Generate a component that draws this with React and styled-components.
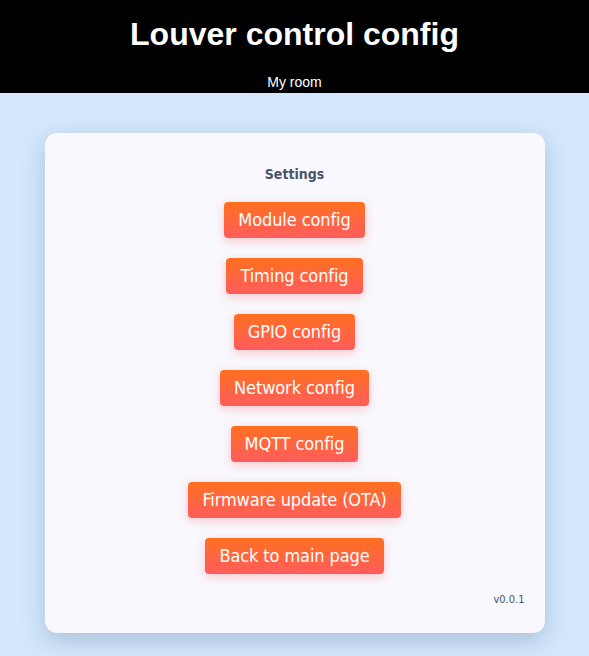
import React from "react";
import styled, { createGlobalStyle } from "styled-components";

const GlobalStyle = createGlobalStyle`
  html, body {
    margin: 0;
    padding: 0;
    background: #d4e8fc;
    font-family: "DejaVu Sans Condensed", "DejaVu Sans", sans-serif;
  }
`;

const Page = styled.div`
  min-height: 656px;
  background: #d4e8fc;
`;

const Header = styled.header`
  background: #000;
  color: #fff;
  text-align: center;
  padding: 16px 0 3px;
  font-family: "Liberation Sans", Arial, sans-serif;
`;

const Title = styled.h1`
  margin: 0 0 21px;
  font-size: 32px;
  font-weight: 700;
  line-height: 37px;
`;

const Subtitle = styled.p`
  margin: 0;
  font-size: 14px;
  line-height: 16px;
`;

const Main = styled.main`
  display: flex;
  justify-content: center;
  padding-top: 40px;
`;

const Card = styled.section`
  width: 500px;
  height: 500px;
  box-sizing: border-box;
  background: #f8f8fe;
  border-radius: 12px;
  box-shadow: 0 8px 24px rgba(60, 90, 130, 0.28);
  padding: 33px 20px 27px;
  display: flex;
  flex-direction: column;
  align-items: center;
`;

const Heading = styled.h2`
  margin: 0 0 20px;
  font-size: 14px;
  line-height: 16px;
  font-weight: 700;
  color: #4a5568;
`;

const ButtonList = styled.nav`
  display: flex;
  flex-direction: column;
  align-items: center;
  gap: 20px;
`;

const Button = styled.button`
  height: 36px;
  padding: 0 14px;
  border: none;
  border-radius: 4px;
  background: linear-gradient(180deg, #ff7020 0%, #ff5c5c 100%);
  color: #fff;
  font-family: "DejaVu Sans Condensed", "DejaVu Sans", sans-serif;
  font-size: 18px;
  letter-spacing: -0.1px;
  line-height: 36px;
  cursor: pointer;
  box-shadow: 0 3px 10px rgba(255, 90, 90, 0.3);
  white-space: nowrap;
`;

const Version = styled.div`
  margin-top: auto;
  align-self: flex-end;
  font-size: 11px;
  line-height: 13px;
  color: #4a5568;
`;

const items = [
  "Module config",
  "Timing config",
  "GPIO config",
  "Network config",
  "MQTT config",
  "Firmware update (OTA)",
  "Back to main page",
];

export default function App() {
  return (
    <Page>
      <GlobalStyle />
      <Header>
        <Title>Louver control config</Title>
        <Subtitle>My room</Subtitle>
      </Header>
      <Main>
        <Card>
          <Heading>Settings</Heading>
          <ButtonList>
            {items.map((t) => (
              <Button key={t}>{t}</Button>
            ))}
          </ButtonList>
          <Version>v0.0.1</Version>
        </Card>
      </Main>
    </Page>
  );
}
